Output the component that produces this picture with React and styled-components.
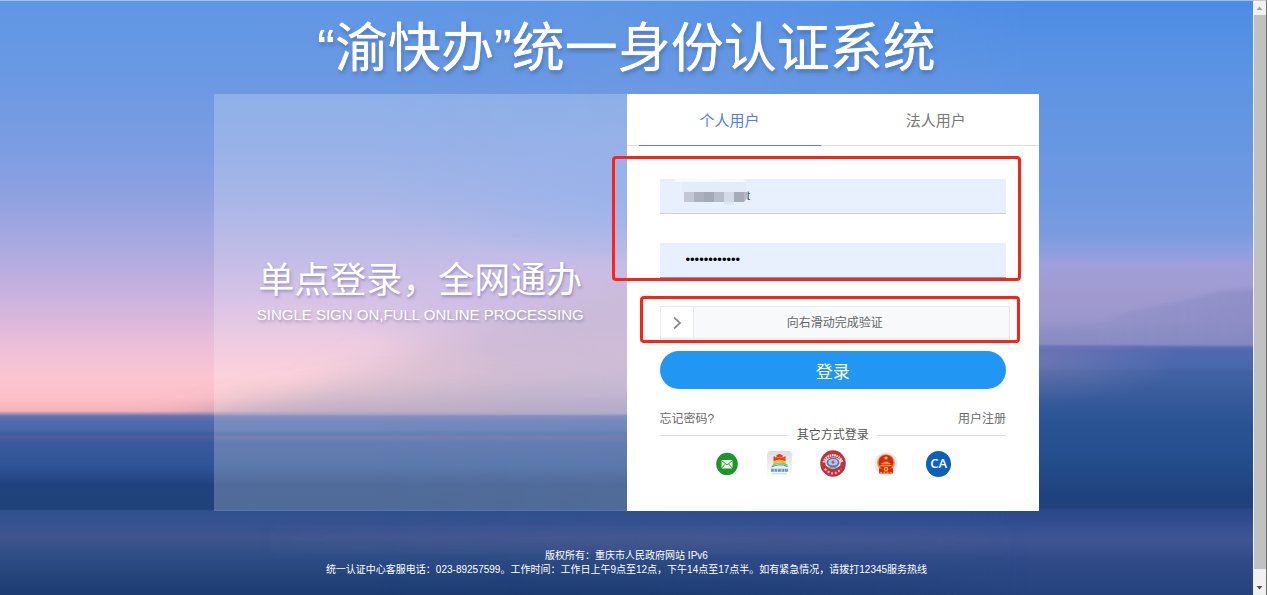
import React, { useState } from "react";
import styled, { createGlobalStyle } from "styled-components";

const GlobalStyle = createGlobalStyle`
  *, *::before, *::after { box-sizing: border-box; }
  body {
    margin: 0;
    font-family: "Liberation Sans", "Noto Sans CJK SC", sans-serif;
    color: #666;
  }
  button, input { font-family: inherit; }
`;

const Page = styled.div`
  display: grid;
  grid-template-columns: 1fr 14px;
  min-height: 100vh;
`;

const Scene = styled.svg`
  grid-area: 1 / 1;
  width: 100%;
  height: 100%;
  min-height: 0;
  contain: size;
`;

const Content = styled.div`
  grid-area: 1 / 1;
  z-index: 1;
  display: flex;
  flex-direction: column;
  align-items: center;
  padding-top: 10px;
  border-top: 1px solid #a9c0e2;
`;

const Title = styled.h1`
  margin: 0 0 7px;
  font-size: 53px;
  line-height: 76px;
  font-weight: 400;
  color: #fff;
  text-shadow: 0 0 1px #fff, 1px 3px 4px rgba(40, 70, 120, 0.45);
`;

const Card = styled.main`
  display: grid;
  grid-template-columns: 1fr 1fr;
  width: 100%;
  max-width: 825px;
`;

const Intro = styled.section`
  display: flex;
  flex-direction: column;
  align-items: center;
  justify-content: center;
  padding-bottom: 26px;
  background: rgba(255, 255, 255, 0.22);
  color: #fff;
  text-shadow: 1px 2px 3px rgba(70, 70, 120, 0.4);
`;

const Slogan = styled.p`
  margin: 0;
  font-size: 36px;
  line-height: 50px;
`;

const SubSlogan = styled.p`
  margin: 0;
  font-size: 15px;
  line-height: 18px;
`;

const LoginPanel = styled.section`
  background: #fff;
`;

const Tabs = styled.div`
  display: grid;
  grid-template-columns: 1fr 1fr;
  height: 52px;
  padding: 0 12px;
  column-gap: 24px;
  border-bottom: 1px solid #dcdcdc;
`;

const Tab = styled.button`
  height: 52px;
  padding: 0;
  border: 0;
  border-bottom: 1px solid ${(p) => (p.$active ? "#5483ee" : "transparent")};
  background: none;
  font-size: 15px;
  color: ${(p) => (p.$active ? "#4f7df3" : "#777")};
  cursor: pointer;
`;

const Form = styled.form`
  display: flex;
  flex-direction: column;
  padding: 33px 33px 34px;
`;

const Highlight = styled.div`
  position: relative;
  display: grid;
  row-gap: 29px;
  &::after {
    content: "";
    position: absolute;
    inset: ${(p) => p.$inset};
    border: 3px solid #fb2318;
    border-radius: 4px;
    pointer-events: none;
  }
`;

const Field = styled.label`
  position: relative;
  display: block;
`;

const TextInput = styled.input`
  display: block;
  width: 100%;
  height: 35px;
  padding: 0 10px 2px ${(p) => p.$indent}px;
  border: 0;
  border-bottom: 1px solid ${(p) => (p.$focused ? "#6e9bee" : "#cdd3dc")};
  border-radius: 0;
  outline: 0;
  background: #e8f0fe;
  font-size: 13px;
  color: ${(p) => (p.$focused ? "#000" : "#2d5b80")};
`;

const Mosaic = styled.svg`
  position: absolute;
  left: 10px;
  top: -2px;
  pointer-events: none;
`;

const SlideHighlight = styled(Highlight)`
  margin-top: 28px;
`;

const SlideBox = styled.label`
  display: grid;
  align-items: center;
  height: 33px;
  margin-right: -4px;
  border: 1px solid #e6e9ec;
  background: #f7f9fb;
  > * { grid-area: 1 / 1; }
`;

const SlideRange = styled.input`
  appearance: none;
  width: 100%;
  height: 31px;
  margin: 0;
  background: transparent;
  outline: 0;
  &::-webkit-slider-thumb {
    appearance: none;
    width: 33px;
    height: 31px;
    border-right: 1px solid #e6e9ec;
    background: #fff;
  }
`;

const SlideText = styled.span`
  justify-self: center;
  font-size: 12px;
  line-height: 18px;
  pointer-events: none;
`;

const SlideArrow = styled.svg`
  margin-left: 11px;
  pointer-events: none;
`;

const Submit = styled.button`
  height: 38px;
  margin-top: 12px;
  padding: 0;
  border: 0;
  border-radius: 19px;
  background: #2196f3;
  font-size: 17px;
  color: #fff;
  cursor: pointer;
`;

const LinkRow = styled.div`
  display: flex;
  justify-content: space-between;
  margin-top: 21px;
`;

const TextLink = styled.a`
  font-size: 12px;
  line-height: 18px;
  color: #6b6b6b;
  text-decoration: none;
`;

const Divider = styled.div`
  display: flex;
  align-items: center;
  gap: 8px;
  font-size: 12px;
  line-height: 14px;
  color: #555;
  &::before, &::after {
    content: "";
    flex: 1;
    height: 1px;
    background: #dedede;
  }
`;

const Providers = styled.nav`
  display: flex;
  justify-content: center;
  margin-top: 8px;
`;

const Provider = styled.a`
  display: flex;
  align-items: center;
  justify-content: center;
  width: 53px;
  height: 27px;
  text-decoration: none;
`;

const Footer = styled.footer`
  margin-top: 38px;
  font-size: 10px;
  line-height: 14px;
  text-align: center;
  color: #fff;
  p { margin: 0; }
`;

const ScrollRail = styled.div`
  display: flex;
  flex-direction: column;
  background: #f1f1f1;
  border-top: 1px solid #c4cad2;
  border-right: 1px solid #6d6d6d;
`;

const ScrollArrow = styled.svg`
  flex: none;
  width: 13px;
  height: 14px;
`;

const ScrollThumb = styled.div`
  flex: 1;
  margin: 0 0 12px 1px;
  background: #c1c1c1;
`;

function Stops({ list }) {
  return list.map(([at, color]) => (
    <stop key={at} offset={at / 595} stopColor={color} />
  ));
}

const leftStops = [
  [0, "#5f97e5"], [80, "#6b99e3"], [150, "#7c9de2"], [190, "#8ca0e1"],
  [225, "#9fa6e1"], [260, "#b2abe0"], [300, "#cdb3df"], [340, "#e8bdda"],
  [375, "#fac5d2"], [398, "#fcc0c6"], [411, "#f5b3ba"], [416, "#6572ae"],
  [422, "#5069aa"], [430, "#4a67aa"], [433, "#3f5da0"], [438, "#4d5c9c"],
  [442, "#3b5a9c"], [465, "#2f5496"], [485, "#20437f"], [509, "#1f427b"],
  [511, "#30508c"], [530, "#385391"], [538, "#40558f"], [560, "#2c4b84"],
  [595, "#1c3b72"],
];
const rightStops = [
  [0, "#4c8ce4"], [80, "#5d94e3"], [150, "#6897e1"], [200, "#7099e1"],
  [235, "#7b9be1"], [256, "#929fe0"], [264, "#9ea0dc"], [290, "#9f9bd2"],
  [320, "#9795ca"], [344, "#8389c0"], [347, "#5069b0"], [368, "#4967ad"],
  [371, "#4363a3"], [400, "#375a9b"], [420, "#2b5496"], [460, "#234d8b"],
  [495, "#20427e"], [507, "#1f417c"],
  [509, "#29478a"], [525, "#344f91"], [540, "#3f5593"], [560, "#304a88"],
  [595, "#25427e"],
];

function Seascape() {
  return (
    <Scene viewBox="0 0 1253 595" preserveAspectRatio="none" aria-hidden="true">
      <defs>
        <linearGradient id="west" x1="0" y1="0" x2="0" y2="1"><Stops list={leftStops} /></linearGradient>
        <linearGradient id="east" x1="0" y1="0" x2="0" y2="1"><Stops list={rightStops} /></linearGradient>
        <linearGradient id="fade">
          <stop offset="0.3" stopColor="#000" />
          <stop offset="0.5" stopColor="#101010" />
          <stop offset="0.82" stopColor="#fff" />
        </linearGradient>
        <linearGradient id="cloud" gradientUnits="userSpaceOnUse" x1="330" y1="414" x2="600" y2="280">
          <stop offset="0" stopColor="#bda3ba" stopOpacity="0.25" />
          <stop offset="0.6" stopColor="#b4a2c6" stopOpacity="0.7" />
          <stop offset="1" stopColor="#baa6cc" stopOpacity="0.85" />
        </linearGradient>
        <linearGradient id="haze" gradientUnits="userSpaceOnUse" x1="0" y1="375" x2="0" y2="416">
          <stop offset="0" stopColor="#8e93bb" stopOpacity="0" />
          <stop offset="1" stopColor="#8388ae" stopOpacity="0.7" />
        </linearGradient>
        <linearGradient id="ridge" gradientUnits="userSpaceOnUse" x1="1100" y1="0" x2="1253" y2="0">
          <stop offset="0" stopColor="#787fba" stopOpacity="0.2" />
          <stop offset="1" stopColor="#787fba" stopOpacity="0.4" />
        </linearGradient>
        <radialGradient id="shallow">
          <stop offset="0" stopColor="#a08abb" stopOpacity="0.4" />
          <stop offset="1" stopColor="#a08abb" stopOpacity="0" />
        </radialGradient>
        <radialGradient id="blue">
          <stop offset="0" stopColor="#7a9de6" stopOpacity="0.85" />
          <stop offset="1" stopColor="#7a9de6" stopOpacity="0" />
        </radialGradient>
        <radialGradient id="violet">
          <stop offset="0" stopColor="#bcaae0" stopOpacity="0.75" />
          <stop offset="1" stopColor="#bcaae0" stopOpacity="0" />
        </radialGradient>
        <mask id="eastMask"><rect width="1253" height="595" fill="url(#fade)" /></mask>
        <clipPath id="sky"><rect width="900" height="414" /></clipPath>
        <clipPath id="sea"><rect y="347" width="1253" height="248" /></clipPath>
        <filter id="soft" x="-20%" y="-20%" width="140%" height="140%"><feGaussianBlur stdDeviation="14" /></filter>
        <filter id="edge"><feGaussianBlur stdDeviation="2" /></filter>
      </defs>
      <rect width="1253" height="595" fill="url(#west)" />
      <rect width="1253" height="595" fill="url(#east)" mask="url(#eastMask)" />
      <g clipPath="url(#sky)">
        <ellipse cx="500" cy="300" rx="190" ry="60" fill="url(#violet)" />
        <ellipse cx="660" cy="190" rx="290" ry="75" fill="url(#blue)" />
        <path d="M240 440 L330 375 L430 340 L520 315 L640 275 L820 235 L820 440Z" fill="url(#cloud)" filter="url(#soft)" />
        <path d="M130 440 L260 402 L400 378 L640 370 L820 370 L820 440Z" fill="url(#haze)" filter="url(#soft)" />
      </g>
      <path d="M1030 278 Q1080 266 1120 268 T1260 262 V346 H1030Z" fill="#a79ccf" fillOpacity="0.3" filter="url(#edge)" />
      <path d="M1030 328 L1100 324 L1128 312 L1190 299 L1220 291 L1270 288 V346 H1030Z" fill="url(#ridge)" filter="url(#edge)" />
      <ellipse cx="1030" cy="360" rx="150" ry="44" fill="url(#shallow)" clipPath="url(#sea)" />
      <ellipse cx="640" cy="540" rx="370" ry="10" fill="#5a609b" fillOpacity="0.3" filter="url(#soft)" />
    </Scene>
  );
}

const mosaicCells = [
  ["#c3c7d1", 12], ["#adb1bd", 22], ["#a5a9b5", 32], ["#b8bcc8", 42],
  ["#d3d9e5", 52], ["#a7abb7", 62],
];

function MailIcon() {
  return (
    <svg width="22" height="24" viewBox="0 0 22 24" aria-hidden="true">
      <ellipse cx="11" cy="12" rx="10.8" ry="11.3" fill="#1f9428" />
      <rect x="5.5" y="8" width="11" height="8.4" rx="0.8" fill="#e9f6e8" />
      <path d="M5.5 8.6 L11 12.8 L16.5 8.6 M5.8 16 L9.4 12 M16.2 16 L12.6 12" fill="none" stroke="#2b9a33" strokeWidth="0.9" />
    </svg>
  );
}

function CityIcon() {
  return (
    <svg width="25" height="26" viewBox="0 0 25 26" aria-hidden="true">
      <defs>
        <linearGradient id="tile" x1="0" y1="0" x2="0" y2="1">
          <stop offset="0" stopColor="#dedede" />
          <stop offset="1" stopColor="#fcfcfc" />
        </linearGradient>
      </defs>
      <rect width="25" height="26" rx="4" fill="url(#tile)" />
      <path d="M6.5 10.5 V5.5 H8 V6.3 H9.5 V3.8 H11.3 V3 H13.7 V3.8 H15.5 V6.3 H17 V5.5 H18.5 V10.5 L15.5 9.2 L12.5 8.8 L9.5 9.2Z" fill="#ea3b24" />
      <path d="M10 6.5 H15" stroke="#f8883c" strokeWidth="0.8" />
      <path d="M6.5 12.6 Q12.5 7 18.5 12.6" fill="none" stroke="#f8b62b" strokeWidth="2" />
      <path d="M5.5 14.6 Q12.5 9.6 20.5 14.4" fill="none" stroke="#8fc644" strokeWidth="1.5" />
      <path d="M4.6 16 Q13 11.8 20.5 15.6" fill="none" stroke="#3192d2" strokeWidth="1" />
      <path d="M4 19.3 H21" stroke="#5c91c4" strokeWidth="3" strokeDasharray="2.9 0.6" />
      <path d="M4.5 19 H20.5" stroke="#b7d0e6" strokeWidth="0.8" strokeDasharray="1 1.1" />
      <path d="M5 22.8 H20" stroke="#b5d2e6" strokeWidth="1" strokeDasharray="1.4 0.4" />
    </svg>
  );
}

function SealIcon() {
  return (
    <svg width="26" height="27" viewBox="0 0 26 27" aria-hidden="true">
      <ellipse cx="13" cy="13.5" rx="12.8" ry="13.2" fill="#c0313a" />
      <path d="M3.6 12.5 A9.8 10.2 0 0 1 22.4 12.5" fill="none" stroke="#f7dddd" strokeWidth="2.3" strokeDasharray="1.7 0.6" />
      <path d="M4.8 18.8 Q13 27.8 21.2 18.8" fill="none" stroke="#eebfc1" strokeWidth="2.2" strokeDasharray="2 1.8" />
      <path d="M5 10.2 Q13 4.5 21 10.2 L20.3 15.5 Q13 22.5 5.7 15.5Z" fill="#eee4ec" />
      <ellipse cx="13" cy="12.6" rx="6.5" ry="4.8" fill="#5277ae" />
      <ellipse cx="13" cy="12.2" rx="4.7" ry="3.3" fill="#a8cdea" />
      <path d="M13 10.4 V14 M11.4 12.2 H14.6" stroke="#d2323b" strokeWidth="1" />
      <path d="M8.5 16.8 Q13 19 17.5 16.8" fill="none" stroke="#8590b8" strokeWidth="1.2" />
    </svg>
  );
}

function EmblemIcon() {
  return (
    <svg width="24" height="26" viewBox="0 0 24 26" aria-hidden="true">
      <circle cx="12" cy="13" r="11.6" fill="#e9e9ea" />
      <path d="M5 16 H19 L18.8 22.6 H5.2Z" fill="#d2261e" />
      <circle cx="12" cy="12" r="8.9" fill="#e2a22c" />
      <circle cx="12" cy="11.4" r="7.5" fill="#d5221d" />
      <path d="M12 4.8 L12.7 6.3 L14.3 6.4 L13.1 7.4 L13.5 9 L12 8.1 L10.5 9 L10.9 7.4 L9.7 6.4 L11.3 6.3Z" fill="#f7cd42" />
      <path d="M6.3 14.8 H17.7 M7.5 12.8 H16.5 M9.5 11.2 H14.5" stroke="#f3bc3a" strokeWidth="1.1" />
      <path d="M5.5 17 Q12 20 18.5 17 V20.5 H5.5Z" fill="#d5261e" />
      <circle cx="12" cy="18" r="2.3" fill="#efb336" />
      <circle cx="12" cy="18" r="0.9" fill="#d5221d" />
      <path d="M6 21.8 H18" stroke="#f1b637" strokeWidth="1" strokeDasharray="2 1.3" />
    </svg>
  );
}

const CaBadge = styled.span`
  width: 25px;
  height: 26px;
  border-radius: 50%;
  background: #0e5fb8;
  font-family: "Open Sans", sans-serif;
  font-size: 13px;
  line-height: 25px;
  font-weight: 600;
  text-align: center;
  color: #fff;
`;

const providers = [
  ["邮箱登录", MailIcon],
  ["城市服务登录", CityIcon],
  ["行业登录", SealIcon],
  ["政务登录", EmblemIcon],
];

export default function App() {
  const [tab, setTab] = useState(0);
  return (
    <>
      <GlobalStyle />
      <Page>
        <Seascape />
        <Content>
          <Title>“渝快办”统一身份认证系统</Title>
          <Card>
            <Intro>
              <Slogan>单点登录，全网通办</Slogan>
              <SubSlogan>SINGLE SIGN ON,FULL ONLINE PROCESSING</SubSlogan>
            </Intro>
            <LoginPanel>
              <Tabs role="tablist">
                {["个人用户", "法人用户"].map((name, i) => (
                  <Tab key={name} type="button" role="tab" aria-selected={tab === i} $active={tab === i} onClick={() => setTab(i)}>
                    {name}
                  </Tab>
                ))}
              </Tabs>
              <Form onSubmit={(e) => e.preventDefault()}>
                <Highlight $inset="-23px -15px -3px -48px">
                  <Field>
                    <TextInput aria-label="用户名" defaultValue="t" $indent={87} />
                    <Mosaic width="82" height="30" viewBox="0 0 82 30" aria-hidden="true">
                      <path d="M2 5 Q8 0 18 1 L70 2 Q76 3 76 5Z" fill="#f6f9ff" />
                      <rect x="12" y="5" width="64" height="10" fill="#e4ecfb" />
                      {mosaicCells.map(([fill, x]) => (
                        <rect key={x} x={x + 2} y="15" width="10" height="10" fill={fill} />
                      ))}
                      <path d="M74 15 H78 Q78 21 74 25Z" fill="#b0b8c8" />
                      <rect x="54" y="25" width="10" height="3" fill="#dce6f6" />
                    </Mosaic>
                  </Field>
                  <Field>
                    <TextInput type="password" aria-label="密码" defaultValue="abcdefghijkl" $indent={26} $focused />
                  </Field>
                </Highlight>
                <SlideHighlight $inset="-10px -14px -4px -20px">
                  <SlideBox>
                    <SlideRange type="range" min="0" max="100" defaultValue="0" />
                    <SlideArrow width="11" height="16" viewBox="0 0 11 16" aria-hidden="true">
                      <path d="M2 2.5 L8 8 L2 13.5" fill="none" stroke="#8c8c8c" strokeWidth="1.8" />
                    </SlideArrow>
                    <SlideText>向右滑动完成验证</SlideText>
                  </SlideBox>
                </SlideHighlight>
                <Submit type="submit">登录</Submit>
                <LinkRow>
                  <TextLink href="#forgot">忘记密码?</TextLink>
                  <TextLink href="#register">用户注册</TextLink>
                </LinkRow>
                <Divider>其它方式登录</Divider>
                <Providers>
                  {providers.map(([label, Icon]) => (
                    <Provider key={label} href="#login" aria-label={label}><Icon /></Provider>
                  ))}
                  <Provider href="#ca"><CaBadge>CA</CaBadge></Provider>
                </Providers>
              </Form>
            </LoginPanel>
          </Card>
          <Footer>
            <p>版权所有：重庆市人民政府网站 IPv6</p>
            <p>统一认证中心客服电话：023-89257599。工作时间：工作日上午9点至12点，下午14点至17点半。如有紧急情况，请拨打12345服务热线</p>
          </Footer>
        </Content>
        <ScrollRail aria-hidden="true">
          <ScrollArrow viewBox="0 0 13 14"><path d="M3.5 9 L6.5 5.5 L9.5 9Z" fill="#a3a3a3" /></ScrollArrow>
          <ScrollThumb />
          <ScrollArrow viewBox="0 0 13 14"><path d="M3.5 5 L6.5 8.5 L9.5 5Z" fill="#505050" /></ScrollArrow>
        </ScrollRail>
      </Page>
    </>
  );
}
